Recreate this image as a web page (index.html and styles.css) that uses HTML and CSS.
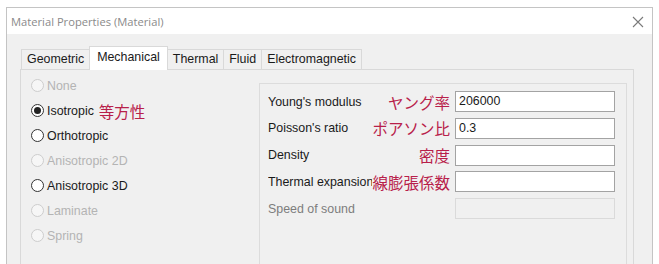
FILE: index.html
```html
<!DOCTYPE html>
<html lang="ja">
<head>
    <meta charset="UTF-8">
    <title>Material Properties (Material)</title>
    <link rel="stylesheet" href="styles.css">
</head>
<body>
    <div class="window">
        <div class="titlebar">
            <span class="title">Material Properties (Material)</span>
            <span class="close">
                <svg width="12" height="12" viewBox="0 0 12 12"><path d="M1 1L11 11M11 1L1 11" stroke="#7a7a7a" stroke-width="1.1" fill="none"/></svg>
            </span>
        </div>
        <div class="client">
            <ul class="tabs">
                <li class="tab">Geometric</li>
                <li class="tab active">Mechanical</li>
                <li class="tab">Thermal</li>
                <li class="tab">Fluid</li>
                <li class="tab">Electromagnetic</li>
            </ul>
            <div class="panel">
                <div class="radios">
                    <div class="radio disabled"><span class="dot"></span>None</div>
                    <div class="radio checked"><span class="dot"></span>Isotropic<span class="jp jp-inline">等方性</span></div>
                    <div class="radio"><span class="dot"></span>Orthotropic</div>
                    <div class="radio disabled"><span class="dot"></span>Anisotropic 2D</div>
                    <div class="radio"><span class="dot"></span>Anisotropic 3D</div>
                    <div class="radio disabled"><span class="dot"></span>Laminate</div>
                    <div class="radio disabled"><span class="dot"></span>Spring</div>
                </div>
                <div class="group">
                    <div class="row">
                        <div class="label"><span class="en">Young's modulus</span><span class="jp">ヤング率</span></div>
                        <div class="field">206000</div>
                    </div>
                    <div class="row">
                        <div class="label"><span class="en">Poisson's ratio</span><span class="jp">ポアソン比</span></div>
                        <div class="field">0.3</div>
                    </div>
                    <div class="row">
                        <div class="label"><span class="en">Density</span><span class="jp">密度</span></div>
                        <div class="field"></div>
                    </div>
                    <div class="row">
                        <div class="label"><span class="en">Thermal expansion</span><span class="jp">線膨張係数</span></div>
                        <div class="field"></div>
                    </div>
                    <div class="row">
                        <div class="label off"><span class="en">Speed of sound</span></div>
                        <div class="field off"></div>
                    </div>
                </div>
            </div>
        </div>
    </div>
</body>
</html>
```

FILE: styles.css
```css
*{
    margin: 0;
    padding: 0;
    box-sizing: border-box;
}

body{
    background: #fff;
    font-family: "Liberation Sans", Arial, sans-serif;
    font-size: 12.4px;
    color: #1a1a1a;
}

.window{
    margin: 7px 6px 0 6px;
    height: 257px;
    border: 1px solid #c4c4c4;
    border-bottom: 0;
    overflow: hidden;
    background: #f0f0f0;
}

.titlebar{
    height: 26px;
    background: #fff;
    display: flex;
    align-items: center;
    justify-content: space-between;
    padding: 0 8px 0 4px;
}

.title{
    font-family: "Open Sans", sans-serif;
    font-size: 11.2px;
    color: #8a8a8a;
}

.close{
    display: flex;
    margin-top: 1px;
}

.client{
    padding: 12px 0 0 13px;
}

.tabs{
    list-style: none;
    display: flex;
    align-items: flex-end;
    height: 23px;
    padding-left: 1px;
}

.tab{
    height: 20px;
    padding: 2px 5px 0;
    background: #f0f0f0;
    border: 1px solid #d9d9d9;
    border-bottom: 0;
    margin-right: -1px;
}

.tab.active{
    height: 24px;
    padding: 3px 7px 0;
    background: #fff;
    position: relative;
    z-index: 1;
    margin-bottom: -1px;
}

.panel{
    width: 614px;
    height: 200px;
    border: 1px solid #d9d9d9;
    background: #f0f0f0;
    display: flex;
    align-items: flex-start;
}

.radios{
    width: 238px;
    padding: 3px 0 0 10px;
}

.radio{
    height: 25px;
    display: flex;
    align-items: center;
}

.radio .dot{
    width: 13px;
    height: 13px;
    border: 1px solid #333;
    border-radius: 50%;
    background: #fff;
    margin-right: 3px;
    display: flex;
    align-items: center;
    justify-content: center;
}

.radio.checked .dot::after{
    content: "";
    width: 7px;
    height: 7px;
    border-radius: 50%;
    background: #222;
}

.radio.disabled{
    color: #b4b4b4;
}

.radio.disabled .dot{
    border-color: #cdcdcd;
    background: #f6f6f6;
}

.jp{
    font-family: "Noto Sans CJK JP", sans-serif;
    font-size: 15.5px;
    color: #b8204a;
    white-space: nowrap;
}

.jp-inline{
    margin-left: 5px;
}

.group{
    width: 368px;
    height: 190px;
    margin-top: 13px;
    border: 1px solid #dcdcdc;
    border-bottom: 0;
    padding: 7px 0 0 8px;
    display: flex;
    flex-direction: column;
    gap: 5.8px;
}

.row{
    display: flex;
    align-items: center;
    height: 21px;
}

.label{
    width: 182px;
    display: flex;
    align-items: center;
    justify-content: space-between;
    margin-right: 5px;
}

.label .en{
    overflow: hidden;
    white-space: nowrap;
    flex: 1;
    min-width: 0;
}

.label.off{
    color: #7d7d7d;
}

.field{
    width: 160px;
    height: 21px;
    border: 1px solid #a3a3a3;
    background: #fff;
    padding: 2px 0 0 3px;
}

.field.off{
    border-color: #dadada;
    background: #f0f0f0;
}
```
